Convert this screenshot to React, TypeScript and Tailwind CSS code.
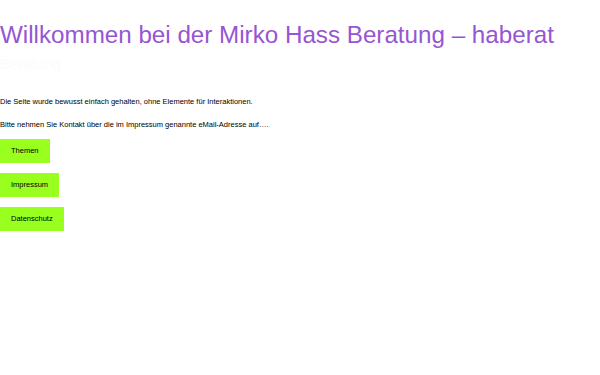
const links = ["Themen", "Impressum", "Datenschutz"];

export default function App() {
  return (
    <main className="min-h-[375px] w-[600px] bg-white font-['Liberation_Sans',Arial,sans-serif] text-black">
      <h1 className="pt-[21px] text-[24.2px] leading-[28px] text-[#9656d4]">
        Willkommen bei der Mirko Hass Beratung – haberat
      </h1>
      <p className="mt-[5px] h-[20px] text-[15px] leading-[20px] text-[#fbfbfb]">Beratung</p>
      <div className="mt-[23px] flex flex-col gap-[13px] text-[7.5px] leading-[10px]">
        <p>Die Seite wurde bewusst einfach gehalten, ohne Elemente für Interaktionen.</p>
        <p>Bitte nehmen Sie Kontakt über die im Impressum genannte eMail-Adresse auf….</p>
      </div>
      <nav className="mt-[9px] flex flex-col items-start gap-[10px]">
        {links.map((l) => (
          <a
            key={l}
            className="flex h-[24px] items-center bg-[#99ff1f] px-[11px] text-[7.5px] text-black"
          >
            {l}
          </a>
        ))}
      </nav>
    </main>
  );
}
